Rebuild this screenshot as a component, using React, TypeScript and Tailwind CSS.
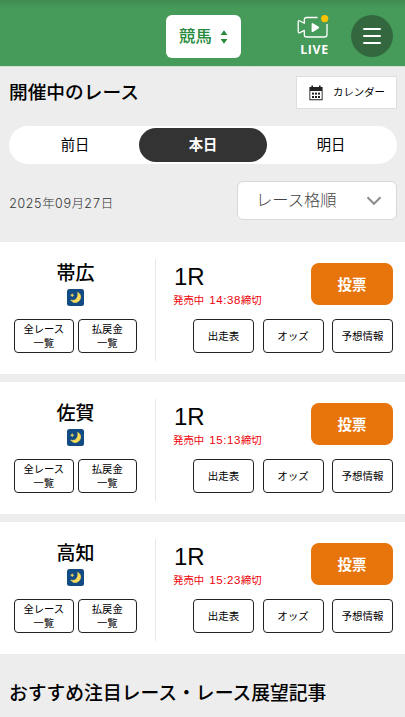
import React from "react";

const races = [
  { place: "帯広", race: "1R", deadline: "14:38" },
  { place: "佐賀", race: "1R", deadline: "15:13" },
  { place: "高知", race: "1R", deadline: "15:23" },
];

function LiveIcon() {
  return (
    <svg width="33" height="25" viewBox="0 0 33 25" fill="none">
      <path
        d="M20.5 2.5H9.6Q7.3 2.5 7.3 4.8V8.3L3 6Q1.2 5.2 1.2 7V16.6Q1.2 18.4 3 17.6L7.3 15.4V19.4Q7.3 22 9.8 22H27.5Q30 22 30 19.5V9"
        stroke="white"
        strokeWidth="1.3"
        strokeLinejoin="round"
      />
      <path
        d="M15.5 9V16.2L21.3 12.6Z"
        fill="white"
        stroke="white"
        strokeWidth="1.8"
        strokeLinejoin="round"
      />
      <circle cx="27.7" cy="3.6" r="3.6" fill="#fdc200" />
    </svg>
  );
}

function CalendarIcon() {
  return (
    <svg width="14" height="16" viewBox="0 0 14 16" className="shrink-0">
      <path
        fillRule="evenodd"
        fill="#222"
        d="M0.4 2H2.4V0.6H4V2H10V0.6H11.6V2H13.6V15.2H0.4ZM1.3 6V14.3H12.7V6Z"
      />
      <g fill="#222">
        <rect x="3" y="7.6" width="2" height="2" />
        <rect x="6" y="7.6" width="2" height="2" />
        <rect x="9" y="7.6" width="2" height="2" />
        <rect x="3" y="11" width="2" height="2" />
        <rect x="6" y="11" width="2" height="2" />
        <rect x="9" y="11" width="2" height="2" />
      </g>
    </svg>
  );
}

function NightIcon() {
  return (
    <svg width="17" height="17" viewBox="0 0 17 17">
      <rect width="17" height="17" rx="2.5" fill="#124b84" />
      <path
        d="M10.7 3.4C13.8 5 14.4 8.6 12.4 11.3C10.4 14.1 6 14.3 3.8 11.1C6.2 12 8.5 11.2 9.8 9.2C11 7.3 11.2 5.3 10.7 3.4Z"
        fill="#fddc58"
        stroke="#fddc58"
        strokeWidth="0.8"
      />
      <path
        d="M5.2 4.6L5.7 5.7L6.8 6.2L5.7 6.7L5.2 7.8L4.7 6.7L3.6 6.2L4.7 5.7Z"
        fill="#fddc58"
        stroke="#fddc58"
        strokeWidth="0.5"
      />
    </svg>
  );
}

function OutlineButton({
  className,
  children,
}: {
  className: string;
  children: React.ReactNode;
}) {
  return (
    <button
      className={`flex h-[34px] shrink-0 items-center justify-center whitespace-nowrap rounded border border-[#222] bg-white text-center ${className}`}
    >
      {children}
    </button>
  );
}

function RaceCard({ place, race, deadline }: (typeof races)[number]) {
  return (
    <section className="flex h-[132px] bg-white">
      <div className="flex w-[155px] shrink-0 flex-col pl-3.5 pt-4">
        <div className="w-[123px] text-center text-[19px] font-medium leading-7">
          {place}
        </div>
        <div className="mt-[3px] flex w-[123px] justify-center">
          <NightIcon />
        </div>
        <div className="mt-[13px] flex gap-1">
          <OutlineButton className="w-[59.5px] pb-px text-[10.3px] leading-[13.5px]">
            全レース
            <br />
            一覧
          </OutlineButton>
          <OutlineButton className="w-[59.5px] pb-px text-[10.3px] leading-[13.5px]">
            払戻金
            <br />
            一覧
          </OutlineButton>
        </div>
      </div>
      <div className="mt-[17px] h-[102px] w-px bg-[#e8e8e8]" />
      <div className="flex grow flex-col pl-[17px] pr-3 pt-[21px]">
        <div className="flex h-[42px] justify-between">
          <div>
            <div className="pl-px font-['Liberation_Sans',sans-serif] text-[24px] leading-7">
              {race}
            </div>
            <div className="mt-0.5 flex items-center whitespace-nowrap text-[10.4px] leading-[14px] text-[#ee0008]">
              発売中
              <span className="ml-[5px] font-['Liberation_Sans',sans-serif] text-[11.5px] tracking-[0.6px]">
                {deadline}
              </span>
              締切
            </div>
          </div>
          <button className="h-[42px] w-[82px] rounded-lg bg-[#e8740c] text-[14.5px] font-bold text-white">
            投票
          </button>
        </div>
        <div className="mt-3.5 flex justify-end gap-[8.5px]">
          <OutlineButton className="w-[61px] pb-px text-[10.5px]">出走表</OutlineButton>
          <OutlineButton className="w-[61px] pb-px text-[10.5px]">オッズ</OutlineButton>
          <OutlineButton className="w-[61px] pb-px text-[10.5px]">予想情報</OutlineButton>
        </div>
      </div>
    </section>
  );
}

export default function App() {
  return (
    <div className="h-[717px] w-[405px] overflow-hidden bg-[#ededed] font-['Noto_Sans_CJK_JP',sans-serif] text-black">
      <header className="flex h-[66px] items-start justify-end bg-[#469a5a] bg-linear-to-b from-[#418b52] to-[#469a5a] to-12% pr-3 pt-[15px]">
        <button className="mr-px flex h-[43px] w-[75px] items-center justify-center gap-2 rounded-md bg-white text-[16.4px] font-medium text-[#278b3d]">
          <span className="-mt-0.5">競馬</span>
          <svg width="8" height="14" viewBox="0 0 8 14" fill="#278b3d">
            <path d="M4 0.3L7.4 5H0.6ZM4 13.7L0.6 9H7.4Z" />
          </svg>
        </button>
        <div className="ml-[55px] flex w-[33px] flex-col items-center">
          <LiveIcon />
          <span className="mt-[3px] pl-0.5 font-['Open_Sans',sans-serif] text-[12.4px] font-bold leading-[14px] tracking-[0.6px] text-white">
            LIVE
          </span>
        </div>
        <button className="ml-[21px] flex size-[42px] flex-col items-center justify-center gap-[5px] rounded-full bg-[#33683f]">
          <span className="h-0.5 w-[18px] rounded-full bg-white" />
          <span className="h-0.5 w-[18px] rounded-full bg-white" />
          <span className="h-0.5 w-[18px] rounded-full bg-white" />
        </button>
      </header>

      <main>
        <div className="h-[176px] border-t border-[#d5dfd6] px-2 pl-[9px] pt-[9px]">
          <div className="flex h-[33px] items-center justify-between">
            <h1 className="pb-[3px] text-[18.7px] font-medium">開催中のレース</h1>
            <button className="flex h-[33px] w-[101px] items-center gap-2.5 border border-[#dedede] bg-white pl-3 text-[10.4px]">
              <CalendarIcon />
              <span className="-mt-0.5">カレンダー</span>
            </button>
          </div>
          <div className="mt-[17px] flex h-[38px] items-center rounded-full bg-white p-0.5 text-[14.3px]">
            <button className="h-[34px] flex-1 pb-0.5">前日</button>
            <button className="h-[34px] flex-1 rounded-full bg-[#333] pb-0.5 font-bold text-white">
              本日
            </button>
            <button className="h-[34px] flex-1 pb-0.5">明日</button>
          </div>
          <div className="mt-[17px] flex items-center justify-between">
            <span className="pt-2 font-['Inter','Noto_Sans_CJK_JP',sans-serif] text-[12.5px] font-light tracking-[0.2px] text-[#333] tabular-nums">
              2025年09月27日
            </span>
            <button className="flex h-[39px] w-[160px] items-center justify-between rounded-md border border-[#d8d8d8] bg-white pl-[18px] pr-3.5 text-[16.3px] font-light text-[#444]">
              <span className="-mt-0.5">レース格順</span>
              <svg width="16" height="10" viewBox="0 0 16 10" fill="none">
                <path d="M1.5 1.3L8 7.8L14.5 1.3" stroke="#8c8c8c" strokeWidth="2" />
              </svg>
            </button>
          </div>
        </div>

        <div className="flex flex-col gap-2">
          {races.map((race) => (
            <RaceCard key={race.place} {...race} />
          ))}
        </div>

        <h2 className="pl-[9px] pt-6 text-[18.8px] font-medium leading-7">
          おすすめ注目レース・レース展望記事
        </h2>
      </main>
    </div>
  );
}
